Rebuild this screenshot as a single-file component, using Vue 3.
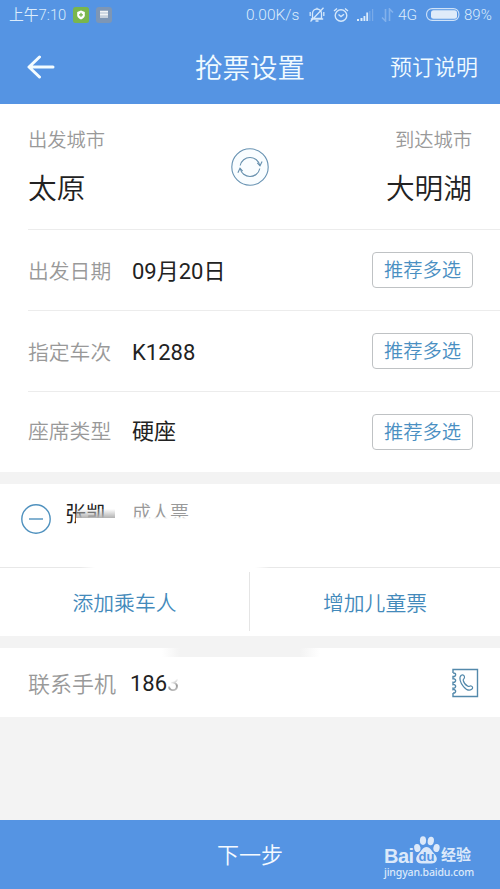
<script setup>
const rows = [
  { label: '出发日期', value: '09月20日' },
  { label: '指定车次', value: 'K1288' },
  { label: '座席类型', value: '硬座' },
]
</script>

<template>
  <div class="screen">
    <div class="status">
      <span class="time">上午7:10</span>
      <svg class="shield" width="16" height="16" viewBox="0 0 16 16">
        <rect width="16" height="16" rx="2.5" fill="#79b64c" />
        <path d="M8 3.500 11.800 5v3.200c0 2-1.700 3.500-3.800 4.400-2.100-.9-3.800-2.400-3.800-4.400V5z" fill="#fff" />
        <path d="M8 5.800v4M6 7.800h4" stroke="#79b64c" stroke-width="1.300" />
      </svg>
      <svg class="note" width="16" height="16" viewBox="0 0 16 16">
        <rect width="16" height="16" rx="3" fill="#7d96b5" />
        <path d="M4 5h8v6H4z" fill="#c5d0dc" />
        <path d="M4 4.500h8M4 7.500h8" stroke="#f1f4f6" stroke-width="1.300" />
      </svg>
      <span class="speed">0.00K/s</span>
      <svg class="mute" width="16" height="16" viewBox="0 0 16 16" fill="none" stroke="#d5e8fb" stroke-width="1.300">
        <path d="M3.500 11.500V6.500a4.500 4.500 0 0 1 9 0v5zM1.800 12h12.400M6.500 14h3M8 .8V2M1.200 5v4M14.800 5v4M1.500 14.500 14.500.8" />
      </svg>
      <svg class="alarm" width="16" height="16" viewBox="0 0 16 16" fill="none" stroke="#d5e8fb" stroke-width="1.400">
        <circle cx="8" cy="8.500" r="5.800" />
        <path d="m5.500 7.500 2.500 2 3-2.300M1 4l3-2.500M15 4l-3-2.500" />
      </svg>
      <svg class="signal" width="17" height="14" viewBox="0 0 17 14">
        <path d="M0 11h2v2H0zM3.500 10h2v3h-2zM6.500 8h1.800v5H6.500zM9.300 4.500h1.800V13H9.300z" fill="#dcecfb" />
        <path d="M12.200 3h1.200v10h-1.200zM15 1h1.200v12H15z" fill="#79aae8" />
      </svg>
      <svg class="arrows" width="13" height="14" viewBox="0 0 13 14" fill="none" stroke="#82b1ec" stroke-width="1.600">
        <path d="M4.500 1v12L1 9.500M8.500 13V1L12 4.500" />
      </svg>
      <span class="net">4G</span>
      <svg class="battery" width="34" height="13" viewBox="0 0 34 13">
        <rect x=".6" y=".6" width="32.300" height="11.800" rx="5.500" fill="none" stroke="#cfe2f8" stroke-width="1.100" />
        <rect x="5" y="2.300" width="26" height="8.400" rx="2.500" fill="#dfebf9" />
      </svg>
      <span class="pct">89%</span>
    </div>

    <header class="nav">
      <svg class="back" width="28" height="24" viewBox="0 0 28 24" fill="none" stroke="#f4fcff" stroke-width="3" stroke-linecap="round" stroke-linejoin="round">
        <path d="M12.500 2 2 12l10.500 10M2.500 12H26" />
      </svg>
      <h1>抢票设置</h1>
      <span class="help">预订说明</span>
    </header>

    <section class="route">
      <div class="city">
        <span class="caption">出发城市</span>
        <span class="name">太原</span>
      </div>
      <svg class="swap" width="38" height="38" viewBox="0 0 38 38" fill="none" stroke="#658fad" stroke-width="1.100">
        <circle cx="19" cy="19" r="18.200" stroke="#6792b2" fill="#f9fdff" />
        <path d="M9.200 17.500A10 10 0 0 1 28.800 17.500M28.800 20.500A10 10 0 0 1 9.200 20.500" />
        <path d="m26.300 14.800 2.700 2.900 2.100-4.300M6.900 24.800 9 20.300l2.600 2.900" />
      </svg>
      <div class="city right">
        <span class="caption">到达城市</span>
        <span class="name">大明湖</span>
      </div>
    </section>

    <section class="options">
      <div v-for="row in rows" :key="row.label" class="row">
        <span class="label">{{ row.label }}</span>
        <span class="value">{{ row.value }}</span>
        <button class="pick">推荐多选</button>
      </div>
    </section>

    <section class="passengers">
      <div class="person">
        <svg class="minus" width="30" height="30" viewBox="0 0 30 30" fill="none" stroke="#4f91be" stroke-width="1.400">
          <circle cx="15" cy="15" r="14.200" />
          <path d="M8 15h14" />
        </svg>
        <span class="pname">张凯</span>
        <span class="ptype">成人票</span>
      </div>
      <div class="actions">
        <span class="action">添加乘车人</span>
        <span class="action">增加儿童票</span>
      </div>
    </section>

    <section class="contact">
      <span class="label">联系手机</span>
      <span class="phone">186<span class="faded">3</span></span>
      <svg class="book" width="28" height="30" viewBox="0 0 28 30" fill="none" stroke="#5389ab" stroke-width="1.400">
        <path d="M2 5V1.500h24.500v27H2V25M2 5c3.500-.5 3.500 4 0 3.500v2.300c3.500-.5 3.500 4 0 3.500v2.300c3.500-.5 3.500 4 0 3.500v1.500c3.500-.5 3.500 4 0 3.400" />
        <path d="M10.300 7.300c1.800-1.200 3.100.2 3.200 1.800.1 1.800-1.500 1.800-1.300 3.200.6 2.500 2.400 4.700 4.700 6 1.500.7 1.800-.8 3.300-.3 1.700.6 1.900 2.200.5 3.300-2.200 1.800-5.500.4-8.200-2.700-3.200-3.700-5-9.300-2.200-11.300z" stroke-width="1.200" />
      </svg>
    </section>

    <footer class="next">
      下一步
      <div class="mark">
        <div class="logo">
          <span class="bai">Bai</span>
          <svg class="paw" width="27" height="28" viewBox="0 0 27 28" fill="#dce9fa">
            <ellipse cx="4.300" cy="12" rx="3.100" ry="4" transform="rotate(-12 4.300 12)" />
            <ellipse cx="10" cy="4.600" rx="3.100" ry="4.300" />
            <ellipse cx="17.800" cy="5" rx="3.100" ry="4.300" transform="rotate(10 17.800 5)" />
            <ellipse cx="23.500" cy="12" rx="3.100" ry="4" transform="rotate(12 23.500 12)" />
            <path d="M13.500 11c4 0 5 4 8 7 4.500 4.500 2 9.500-3 9.500h-10c-5 0-7.500-5-3-9.500 3-3 4-7 8-7z" />
            <text x="13.500" y="25" text-anchor="middle" class="du">du</text>
          </svg>
          <span class="jy">经验</span>
        </div>
        <span class="url">jingyan.baidu.com</span>
      </div>
    </footer>
  </div>
</template>

<style>
body {
  margin: 0;
}
</style>

<style scoped>
.screen {
  width: 500px;
  height: 889px;
  display: flex;
  flex-direction: column;
  overflow: hidden;
  background: #f3f3f3;
  font-family: Roboto, "Noto Sans CJK SC", sans-serif;
  font-weight: 350;
  color: #222;
}
.screen > * {
  flex: none;
  box-sizing: border-box;
}
.screen span,
h1 {
  white-space: nowrap;
}
.status {
  height: 29px;
  padding-left: 9px;
  display: flex;
  align-items: center;
  background: #5594e3;
  color: #dcecfb;
  font-size: 15.500px;
  line-height: 29px;
}
.status span {
  padding-top: 1px;
}
.time {
  width: 64px;
  font-size: 14.800px;
}
.note {
  margin-left: 7px;
}
.speed {
  width: 56px;
  margin-left: 134px;
}
.mute {
  margin-left: 7px;
}
.alarm {
  margin-left: 8px;
}
.signal {
  margin-left: 8px;
}
.arrows {
  margin-left: 7px;
}
.net {
  width: 21px;
  margin-left: 4px;
}
.battery {
  margin-left: 7px;
}
.pct {
  margin-left: 4px;
  font-size: 15px;
}
.nav {
  height: 75px;
  padding: 0 22px 0 27px;
  display: grid;
  grid-template-columns: 1fr auto 1fr;
  align-items: center;
  background: #5594e3;
  color: #f0faff;
}
h1 {
  margin: 0 0 0 -5px;
  padding-top: 4px;
  font-size: 27.500px;
  line-height: 40px;
  font-weight: 350;
}
.help {
  justify-self: end;
  padding-top: 2px;
  font-size: 22px;
  line-height: 30px;
}
.route {
  height: 125px;
  padding: 22px 28px 0;
  display: flex;
  justify-content: space-between;
  background: #fff;
}
.city {
  width: 150px;
  display: flex;
  flex-direction: column;
}
.city.right {
  align-items: flex-end;
}
.caption {
  font-size: 19.300px;
  line-height: 30px;
  color: #999;
}
.name {
  margin-top: 12px;
  font-size: 28.700px;
  line-height: 42px;
}
.swap {
  margin-top: 22px;
}
.options {
  padding-left: 28px;
  background: #fff;
}
.row {
  box-sizing: border-box;
  height: 81px;
  padding-right: 28px;
  border-top: 1px solid #ececec;
  display: flex;
  align-items: center;
}
.label {
  width: 104px;
  padding-top: 4px;
  font-size: 20.800px;
  line-height: 30px;
  color: #999;
}
.value {
  flex: 1;
  padding-top: 3px;
  font-size: 22px;
  line-height: 30px;
  font-weight: 400;
}
.row:last-child .label,
.row:last-child .value {
  padding: 0;
}
.pick {
  box-sizing: border-box;
  width: 101px;
  height: 36px;
  margin-right: -1px;
  padding: 2px 0 0;
  border: 1px solid #bfc2c4;
  border-radius: 4px;
  background: #fff;
  color: #4a8fc2;
  font-family: inherit;
  font-size: 19.300px;
  font-weight: 350;
  line-height: 32px;
}
.passengers {
  margin-top: 12px;
  height: 152px;
  background: #fff;
}
.person {
  height: 83px;
  padding: 15px 21px 0;
  box-sizing: border-box;
  display: flex;
  align-items: flex-start;
}
.minus {
  margin-top: 5px;
}
.pname,
.ptype {
  position: relative;
  line-height: 30px;
}
.pname {
  width: 50px;
  margin-left: 14px;
  font-size: 21px;
  font-weight: 400;
}
.pname::after {
  content: "";
  position: absolute;
  left: 11px;
  top: 10px;
  width: 39px;
  height: 20px;
  background: linear-gradient(rgba(255, 255, 255, 0.2), #b2b2b2 9px, #fff 9px);
}
.ptype {
  margin-left: 17px;
  font-size: 19px;
  color: #999;
}
.ptype::after {
  content: "";
  position: absolute;
  left: 0;
  top: 18px;
  width: 100%;
  height: 12px;
  background: linear-gradient(rgba(255, 255, 255, 0.5), #fff 2px);
}
.actions {
  height: 69px;
  display: grid;
  grid-template-columns: 249px 1px 250px;
  background: linear-gradient(90deg, #e8e8e8 80px, #fff 95px, #fff 255px, #e8e8e8 270px) top / 100% 1px no-repeat;
}
.actions::before {
  content: "";
  grid-column: 2;
  grid-row: 1;
  margin: 5px 0;
  background: #e5e5e5;
}
.action {
  grid-row: 1;
  padding-top: 2px;
  text-align: center;
  font-size: 20.800px;
  line-height: 70px;
  height: 67px;
  color: #438abb;
}
.action + .action {
  grid-column: 3;
}
.contact {
  position: relative;
  margin-top: 12px;
  height: 69px;
  padding: 0 21px 0 28px;
  display: flex;
  align-items: center;
  background: #fff;
}
.contact::before {
  content: "";
  position: absolute;
  left: 162px;
  top: 0;
  width: 158px;
  height: 9px;
  background: linear-gradient(90deg, transparent, #f3f3f3 18px, #f3f3f3 138px, transparent);
}
.contact .label {
  width: 102px;
  font-size: 22px;
}
.phone {
  flex: 1;
  padding-top: 2px;
  font-size: 22px;
  line-height: 30px;
  font-weight: 400;
}
.faded {
  color: transparent;
  background: linear-gradient(155deg, #fff 40%, #999 62%, #ddd 85%);
  background-clip: text;
  -webkit-background-clip: text;
}
.next {
  position: relative;
  height: 69px;
  margin-top: auto;
  padding-top: 1px;
  background: #5594e3;
  color: #f5faff;
  text-align: center;
  font-size: 22px;
  line-height: 70px;
}
.mark {
  position: absolute;
  left: 384px;
  top: 16px;
  display: flex;
  flex-direction: column;
  color: #dce9fa;
}
.logo {
  height: 28px;
  display: flex;
  align-items: flex-end;
}
.bai {
  width: 29px;
  font: 700 20px/20px "Liberation Sans", sans-serif;
  letter-spacing: -0.5px;
  height: 18px;
}
.du {
  font: 700 13px "Liberation Sans", sans-serif;
  fill: #5594e3;
}
.jy {
  margin-left: 1px;
  font-size: 15px;
  line-height: 17px;
  font-weight: 700;
}
.url {
  margin-top: 1px;
  text-align: left;
  font: 500 10.500px/14px "Noto Sans", sans-serif;
  letter-spacing: -0.15px;
}
</style>
